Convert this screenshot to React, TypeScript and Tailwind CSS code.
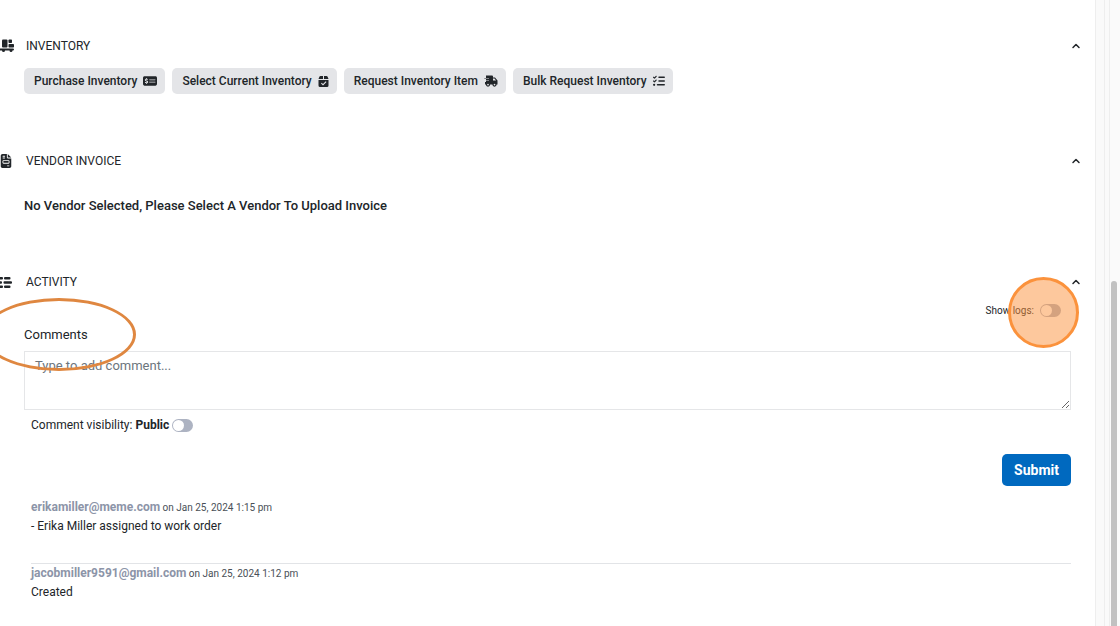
import { useState, type ReactNode } from 'react';
import { ChevronUp } from 'lucide-react';
import { FaFileInvoice, FaListCheck, FaMoneyCheckDollar } from 'react-icons/fa6';

interface SectionHeaderProps {
  icon: ReactNode;
  title: string;
}

const SectionHeader = ({ icon, title }: SectionHeaderProps) => (
  <div className="flex h-5 items-center pr-[13px]">
    <span className="-ml-2 flex w-5 justify-end text-[#212529]">{icon}</span>
    <h2 className="ml-3.5 flex-1 text-xs text-[#212529]">{title}</h2>
    <button type="button" aria-label={`Collapse ${title.toLowerCase()}`}>
      <ChevronUp className="h-3 w-3 text-[#212529]" strokeWidth={3} />
    </button>
  </div>
);

const FlatbedIcon = () => (
  <svg viewBox="0 0 36 28" className="-mr-0.5 h-3.5 w-[18px] shrink-0" fill="currentColor" aria-hidden="true">
    <path d="M0 0h5q3 0 3 3v16h26q2 0 2 2t-2 2h-1a3 3 0 1 1-6 0H18a3 3 0 1 1-6 0H7q-3 0-3-3V4H0Z" />
    <rect x="12" y="1" width="11" height="16" rx="2" />
    <rect x="25" y="1" width="7" height="7" rx="1.500" />
    <rect x="25" y="10" width="11" height="7" rx="1.500" />
  </svg>
);

const TimelineIcon = () => (
  <svg viewBox="0 0 32 26" className="h-[13px] w-4 shrink-0" fill="currentColor" aria-hidden="true">
    <rect x="6" y="2" width="8" height="5" rx="2" />
    <rect x="16" y="2" width="13" height="5" rx="2" />
    <rect x="4" y="10.500" width="8" height="5" rx="2" />
    <rect x="15" y="10.500" width="17" height="5" rx="2" />
    <rect x="6" y="19" width="8" height="5" rx="2" />
    <rect x="16" y="19" width="13" height="5" rx="2" />
  </svg>
);

const BoxCheckIcon = () => (
  <svg viewBox="0 0 22 22" className="h-[11px] w-[11px]" fill="currentColor" aria-hidden="true">
    <path d="M5 0h5v6H1l2-5q.6-1 2-1Zm7 0h5q1.400 0 2 1l2 5h-9Z" />
    <path
      fillRule="evenodd"
      d="M1 8h20v11q0 3-3 3H4q-3 0-3-3Zm14.500 2.500L10 16l-2.500-2.500L6 15l4 4 7-7Z"
    />
  </svg>
);

const FastTruckIcon = () => (
  <svg viewBox="0 0 28 24" className="h-3 w-3.5" aria-hidden="true">
    <path
      fill="currentColor"
      fillRule="evenodd"
      d="M4 1h12q2 0 2 2v2h4l5 6v8H2v-5h2V8H1V6h3ZM18 7v4h6l-3-4Z"
    />
    <path d="M1 7h9M3 11h7" stroke="#e4e5e8" strokeWidth="1" />
    <circle cx="8" cy="19" r="3" fill="#e4e5e8" stroke="currentColor" strokeWidth="2.500" />
    <circle cx="21" cy="19" r="3" fill="#e4e5e8" stroke="currentColor" strokeWidth="2.500" />
  </svg>
);

const actions = [
  { label: 'Purchase Inventory', icon: <FaMoneyCheckDollar className="h-3.5 w-3.5" /> },
  { label: 'Select Current Inventory', icon: <BoxCheckIcon /> },
  { label: 'Request Inventory Item', icon: <FastTruckIcon /> },
  { label: 'Bulk Request Inventory', icon: <FaListCheck className="h-3 w-3" /> },
];

const logs = [
  {
    email: 'erikamiller@meme.com',
    date: 'on Jan 25, 2024 1:15 pm',
    text: '- Erika Miller assigned to work order',
  },
  { email: 'jacobmiller9591@gmail.com', date: 'on Jan 25, 2024 1:12 pm', text: 'Created' },
];

interface ToggleProps {
  id: string;
  checked: boolean;
  onChange: (checked: boolean) => void;
}

const Toggle = ({ id, checked, onChange }: ToggleProps) => (
  <input
    id={id}
    type="checkbox"
    role="switch"
    checked={checked}
    onChange={(e) => onChange(e.target.checked)}
    className="h-[13px] w-[21px] shrink-0 appearance-none rounded-full bg-[#adb3c2] before:m-px before:block before:h-[11px] before:w-[11px] before:rounded-full before:bg-white checked:bg-[#0069bf] checked:before:translate-x-2"
  />
);

export default function App() {
  const [showLogs, setShowLogs] = useState(false);
  const [isPublic, setIsPublic] = useState(false);
  const [comment, setComment] = useState('');

  return (
    <div className="flex h-screen overflow-hidden bg-white font-['Roboto','Liberation_Sans',sans-serif] text-[#212529]">
      <main className="relative min-w-0 flex-1 overflow-hidden pt-9">
        <section>
          <SectionHeader icon={<FlatbedIcon />} title="INVENTORY" />
          <div className="mt-3 flex gap-[7px] pl-6">
            {actions.map((action) => (
              <button
                key={action.label}
                type="button"
                className="flex h-[26px] items-center gap-1.5 rounded-[5px] bg-[#e4e5e8] pr-2 pl-2.5 text-xs font-medium whitespace-nowrap"
              >
                {action.label}
                {action.icon}
              </button>
            ))}
          </div>
        </section>

        <section className="mt-[57px]">
          <SectionHeader icon={<FaFileInvoice className="h-3.5 w-3" />} title="VENDOR INVOICE" />
          <p className="mt-[25px] pl-6 text-[13px] leading-5 font-medium">
            No Vendor Selected, Please Select A Vendor To Upload Invoice
          </p>
        </section>

        <section className="mt-14">
          <SectionHeader icon={<TimelineIcon />} title="ACTIVITY" />
          <div className="pr-6 pl-6">
            <div className="mt-2 flex h-5 items-center justify-end gap-1.5 pr-2.5">
              <label htmlFor="show-logs" className="text-[10px]">
                Show logs:
              </label>
              <Toggle id="show-logs" checked={showLogs} onChange={setShowLogs} />
            </div>
            <label htmlFor="comment" className="mt-[5px] block text-[13px] leading-5">
              Comments
            </label>
            <textarea
              id="comment"
              value={comment}
              onChange={(e) => setComment(e.target.value)}
              placeholder="Type to add comment..."
              className="mt-1.5 block h-[59px] w-full resize-y border border-[#e5e6e8] px-2.5 py-1 text-[13px] leading-5 placeholder:text-[#6c757d]"
            />
            <div className="mt-[5px] flex h-5 items-center gap-[3px] pl-[7px]">
              <label htmlFor="visibility" className="text-xs">
                Comment visibility: <b>Public</b>
              </label>
              <Toggle id="visibility" checked={isPublic} onChange={setIsPublic} />
            </div>
            <div className="mt-[19px] flex justify-end">
              <button type="button" className="h-8 rounded-[5px] bg-[#0069bf] px-3 text-sm font-bold text-white">
                Submit
              </button>
            </div>
            <ul className="mt-3 pl-[7px]">
              {logs.map((log) => (
                <li key={log.email} className="h-[65px] border-[#e2e4e7] not-first:border-t">
                  <p className="text-[10px] leading-[18px] text-[#495057]">
                    <b className="text-xs leading-[18px] text-[#8c94a8]">{log.email}</b> {log.date}
                  </p>
                  <p className="text-xs leading-[18px]">{log.text}</p>
                </li>
              ))}
            </ul>
          </div>
        </section>

        {/* Callouts drawn over the page */}
        <div className="pointer-events-none absolute top-[298px] -left-[18px] h-[73px] w-[154px] rounded-[50%] border-3 border-[#df8740]" />
        <div className="pointer-events-none absolute top-[277px] right-4 h-[71px] w-[71px] rounded-full border-3 border-[#fb923c] bg-[#fb923c]/50" />
      </main>

      <div className="flex w-[25px] shrink-0 border-l border-[#eeeeee] bg-[#fafafa]">
        <div className="ml-2 w-1.5 border-x border-[#eeeeee]" />
        <div className="flex-1 pt-[281px] pl-px">
          <div className="h-full w-1.5 rounded-t-full bg-[#c1c1c1]" />
        </div>
      </div>
    </div>
  );
}
